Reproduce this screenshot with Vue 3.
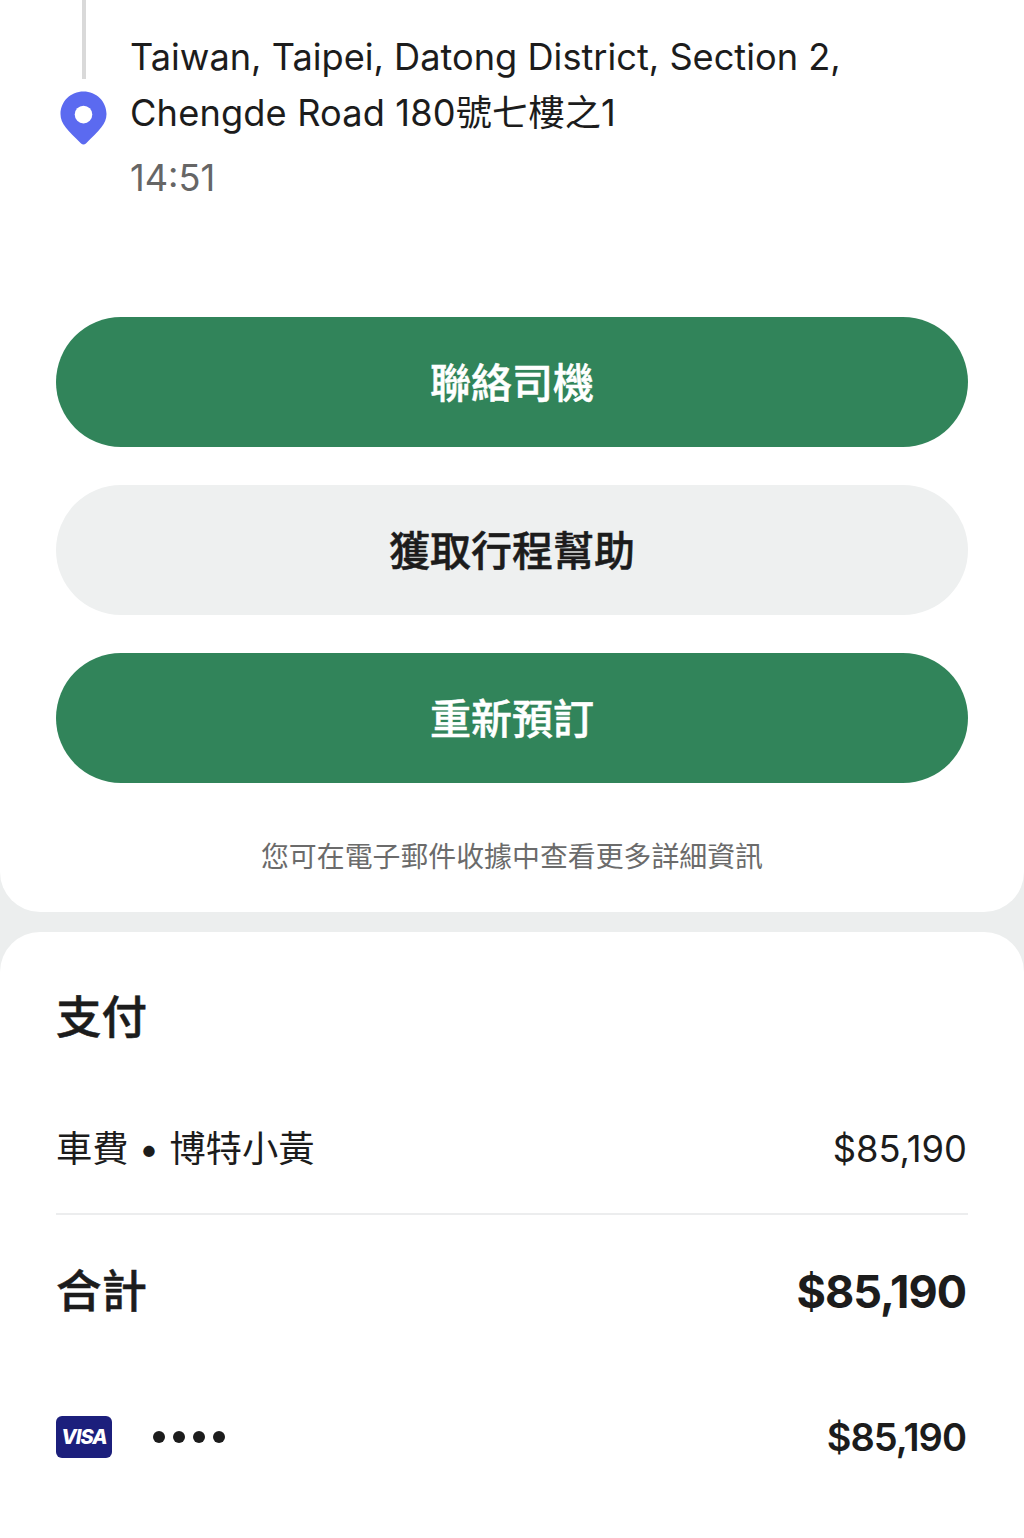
<script setup>
const actions = [
  { label: '聯絡司機', kind: 'primary' },
  { label: '獲取行程幫助', kind: 'secondary' },
  { label: '重新預訂', kind: 'primary' }
]
</script>

<template>
  <div class="page">
    <section class="card trip">
      <div class="route">
        <div class="marker">
          <span class="line"></span>
          <svg class="pin" width="47" height="55" viewBox="0 0 48 55">
            <path d="M24 0C37 0 47.500 10 47.500 23C47.500 33 40 40 26.500 53Q24 55 21.500 53C8 40 .5 33 .5 23C.5 10 11 0 24 0Z" fill="#5b6af0" />
            <circle cx="24" cy="23.500" r="9" fill="#fff" />
          </svg>
        </div>
        <div class="stop">
          <p class="address">Taiwan, Taipei, Datong District, Section 2, <span class="road">Chengde Road 180號七樓之1</span></p>
          <p class="time">14:51</p>
        </div>
      </div>
      <div class="actions">
        <button v-for="a in actions" :key="a.label" class="action" :class="a.kind">{{ a.label }}</button>
      </div>
      <p class="note">您可在電子郵件收據中查看更多詳細資訊</p>
    </section>

    <section class="card payment">
      <h2 class="title">支付</h2>
      <div class="fare">
        <span>車費 • 博特小黃</span>
        <span class="fare-value">$85,190</span>
      </div>
      <div class="total">
        <span class="total-label">合計</span>
        <span class="total-value">$85,190</span>
      </div>
      <div class="method">
        <span class="visa">VISA</span>
        <span class="dots"><i v-for="n in 4" :key="n"></i></span>
        <span class="method-value">$85,190</span>
      </div>
    </section>
  </div>
</template>

<style>
html, body {
  margin: 0;
  background: #eceeee;
}
</style>

<style scoped>
.page {
  height: 1538px;
  overflow: hidden;
  background: #eceeee;
  color: #1c1c1c;
  font-family: Inter, "Noto Sans CJK TC", sans-serif;
  display: flex;
  flex-direction: column;
  gap: 20px;
}
.card {
  background: #fff;
  padding: 0 56px;
}
.trip {
  height: 912px;
  box-sizing: border-box;
  border-radius: 0 0 40px 40px;
}
.route {
  display: flex;
  gap: 20.500px;
  height: 317px;
}
.marker {
  width: 52px;
  margin-left: 1.500px;
  display: flex;
  flex-direction: column;
  align-items: center;
  gap: 12px;
}
.line {
  width: 4px;
  height: 79px;
  background: #d9d9d9;
}
.pin {
  display: block;
}
.stop {
  padding-top: 29px;
}
.address {
  margin: 0;
  font-size: 36.200px;
  line-height: 56px;
  width: 760px;
}
.road {
  letter-spacing: .15px;
}
.time {
  margin: 17px 0 0;
  font-size: 36.200px;
  line-height: 40px;
  color: #666;
}
.actions {
  display: flex;
  flex-direction: column;
  gap: 38px;
}
.action {
  height: 130px;
  padding: 0 0 4px;
  border: none;
  border-radius: 65px;
  font-family: inherit;
  font-size: 41px;
  font-weight: 500;
  -webkit-text-stroke: .5px currentColor;
}
.primary {
  background: #31845a;
  color: #fff;
}
.secondary {
  background: #eef0f0;
  color: #1c1c1c;
}
.note {
  margin: 54px 0 0;
  text-align: center;
  font-size: 27.900px;
  line-height: 40px;
  color: #6b6b6b;
}
.payment {
  flex: 1;
  border-radius: 40px 40px 0 0;
}
.title {
  margin: 56px 0 0;
  font-size: 45.500px;
  line-height: 60px;
  font-weight: 500;
  -webkit-text-stroke: .5px currentColor;
}
.fare {
  margin-top: 68px;
  height: 99px;
  padding-top: 11px;
  box-sizing: border-box;
  display: flex;
  justify-content: space-between;
  font-size: 36.300px;
  line-height: 44px;
  border-bottom: 2px solid #ecedee;
}
.fare-value {
  margin-right: 1px;
}
.total {
  height: 152px;
  display: flex;
  justify-content: space-between;
  align-items: center;
}
.total-label {
  font-size: 45.500px;
  font-weight: 500;
  margin-top: -6px;
  -webkit-text-stroke: .5px currentColor;
}
.total-value {
  font-size: 45px;
  font-weight: 700;
  letter-spacing: -1px;
  margin-right: 2px;
}
.method {
  display: flex;
  align-items: center;
  margin-top: 47px;
}
.visa {
  width: 56px;
  height: 42px;
  border-radius: 6px;
  background: #1c1f7c;
  color: #fff;
  font-size: 20px;
  font-weight: 800;
  font-style: italic;
  letter-spacing: -1px;
  text-align: center;
  line-height: 42px;
}
.dots {
  display: flex;
  gap: 8px;
  margin-left: 41px;
}
.dots i {
  width: 12px;
  height: 12px;
  border-radius: 50%;
  background: #1c1c1c;
}
.method-value {
  margin-left: auto;
  margin-right: 2px;
  font-size: 38px;
  font-weight: 600;
  letter-spacing: -1px;
}
</style>
